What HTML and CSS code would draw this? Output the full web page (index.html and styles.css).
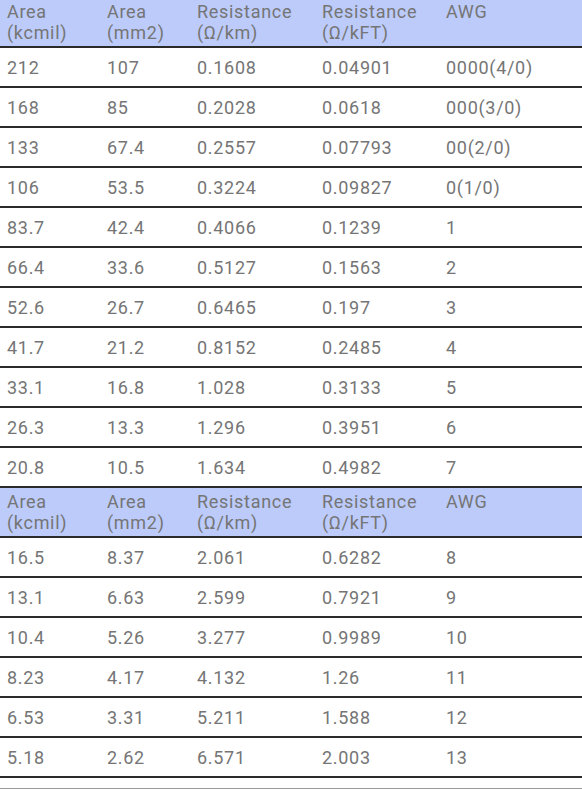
FILE: index.html
```html
<!DOCTYPE html>
<html>
<head>
<meta charset="utf-8">
<link rel="stylesheet" href="styles.css">
</head>
<body>
<table class="wire">
<colgroup><col class="c1"><col class="c2"><col class="c3"><col class="c4"><col class="c5"></colgroup>
<tr class="head"><th>Area<br>(kcmil)</th><th>Area<br>(mm2)</th><th>Resistance<br>(Ω/km)</th><th>Resistance<br>(Ω/kFT)</th><th>AWG<br>&nbsp;</th></tr>
<tr><td>212</td><td>107</td><td>0.1608</td><td>0.04901</td><td>0000(4/0)</td></tr>
<tr><td>168</td><td>85</td><td>0.2028</td><td>0.0618</td><td>000(3/0)</td></tr>
<tr><td>133</td><td>67.4</td><td>0.2557</td><td>0.07793</td><td>00(2/0)</td></tr>
<tr><td>106</td><td>53.5</td><td>0.3224</td><td>0.09827</td><td>0(1/0)</td></tr>
<tr><td>83.7</td><td>42.4</td><td>0.4066</td><td>0.1239</td><td>1</td></tr>
<tr><td>66.4</td><td>33.6</td><td>0.5127</td><td>0.1563</td><td>2</td></tr>
<tr><td>52.6</td><td>26.7</td><td>0.6465</td><td>0.197</td><td>3</td></tr>
<tr><td>41.7</td><td>21.2</td><td>0.8152</td><td>0.2485</td><td>4</td></tr>
<tr><td>33.1</td><td>16.8</td><td>1.028</td><td>0.3133</td><td>5</td></tr>
<tr><td>26.3</td><td>13.3</td><td>1.296</td><td>0.3951</td><td>6</td></tr>
<tr><td>20.8</td><td>10.5</td><td>1.634</td><td>0.4982</td><td>7</td></tr>
<tr class="head head-next"><th>Area<br>(kcmil)</th><th>Area<br>(mm2)</th><th>Resistance<br>(Ω/km)</th><th>Resistance<br>(Ω/kFT)</th><th>AWG<br>&nbsp;</th></tr>
<tr><td>16.5</td><td>8.37</td><td>2.061</td><td>0.6282</td><td>8</td></tr>
<tr><td>13.1</td><td>6.63</td><td>2.599</td><td>0.7921</td><td>9</td></tr>
<tr><td>10.4</td><td>5.26</td><td>3.277</td><td>0.9989</td><td>10</td></tr>
<tr><td>8.23</td><td>4.17</td><td>4.132</td><td>1.26</td><td>11</td></tr>
<tr><td>6.53</td><td>3.31</td><td>5.211</td><td>1.588</td><td>12</td></tr>
<tr><td>5.18</td><td>2.62</td><td>6.571</td><td>2.003</td><td>13</td></tr>
</table>
<div class="next"></div>
</body>
</html>
```
FILE: styles.css
```css
html, body {
  margin: 0;
  padding: 0;
  background: #ffffff;
}
body {
  font-family: Roboto, "Noto Sans", sans-serif;
  color: #757575;
}
.wire {
  width: 582px;
  border-collapse: collapse;
  table-layout: fixed;
  font-size: 18px;
  letter-spacing: 0.7px;
}
.c1 { width: 100px; }
.c2 { width: 90px; }
.c3 { width: 125px; }
.c4 { width: 124px; }
.c5 { width: 143px; }
.wire th, .wire td {
  text-align: left;
  font-weight: 400;
  padding: 0 0 0 7px;
  border-bottom: 2px solid #2a2a2a;
  white-space: nowrap;
}
.head th {
  background: #bccbfa;
  line-height: 21px;
  height: 42px;
  padding-top: 1px;
  padding-bottom: 3px;
  vertical-align: top;
}
.head-next th {
  padding-top: 3px;
}
.wire td {
  box-sizing: border-box;
  height: 38px;
  line-height: 21px;
  padding-top: 9px;
  padding-bottom: 8px;
  vertical-align: top;
}
.next {
  margin-top: 10px;
  border-top: 1px solid #9a9a9a;
}
```
